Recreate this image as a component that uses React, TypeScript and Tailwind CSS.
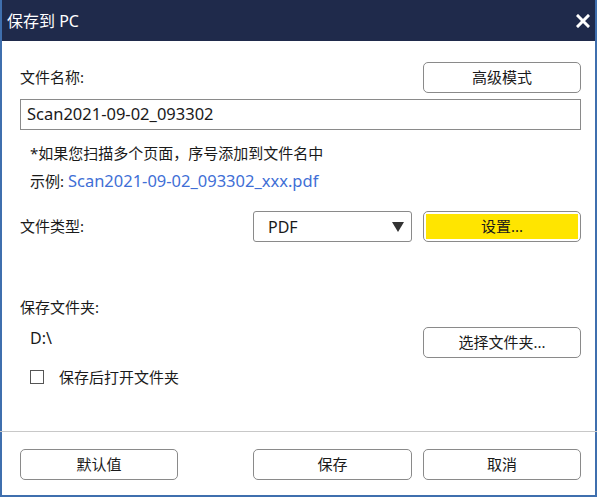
import React from "react";

const font = { fontFamily: '"Noto Sans", "Noto Sans CJK SC", sans-serif' };

function Btn({ children, className = "" }: { children: React.ReactNode; className?: string }) {
  return (
    <div
      className={`flex h-[31px] w-[158px] items-center justify-center rounded-[5px] border border-[#8a8a8a] text-[15px] text-[#1a1a1a] ${className}`}
    >
      {children}
    </div>
  );
}

export default function App() {
  return (
    <div
      className="flex h-[497px] w-[597px] flex-col border-x-[2px] border-b-[2px] border-[#3f6fae] bg-white"
      style={font}
    >
      <div className="flex h-[41px] shrink-0 items-center justify-between bg-[#1f2a4b] pl-[5px] pr-[5px] text-white">
        <span className="text-[16px]">保存到 PC</span>
        <svg width="14" height="14" viewBox="0 0 14 14">
          <path d="M2 2 L12 12 M12 2 L2 12" stroke="white" strokeWidth="3" strokeLinecap="square" />
        </svg>
      </div>
      <div className="flex flex-1 flex-col pl-[18px] pr-[14px] text-[15px] text-[#1a1a1a]">
        <div className="mt-[21px] flex items-center justify-between">
          <span>文件名称:</span>
          <Btn>高级模式</Btn>
        </div>
        <div className="mt-[6px] flex h-[31px] items-center border border-[#8a8a8a] pl-[6px] text-[16.5px]">
          Scan2021-09-02_093302
        </div>
        <div className="mt-[13px] pl-[10px] leading-[20px]">*如果您扫描多个页面，序号添加到文件名中</div>
        <div className="mt-[8px] pl-[10px] leading-[20px]">
          示例: <span className="text-[16.5px] text-[#3f6fd6]">Scan2021-09-02_093302_xxx.pdf</span>
        </div>
        <div className="mt-[20px] flex items-center">
          <span className="flex-1">文件类型:</span>
          <div className="flex h-[31px] w-[159px] items-center justify-between rounded-[3px] border border-[#8a8a8a] pl-[14px] pr-[7px]">
            <span className="text-[16px]">PDF</span>
            <svg width="12" height="10" viewBox="0 0 12 10">
              <path d="M0 0 H12 L6 10 Z" fill="#333" />
            </svg>
          </div>
          <div className="ml-[11px] flex h-[31px] w-[158px] items-center rounded-[5px] border border-[#8a8a8a] p-[2px]">
            <div className="flex h-full w-full items-center justify-center bg-[#ffe500]">设置...</div>
          </div>
        </div>
        <div className="mt-[55px] leading-[20px]">保存文件夹:</div>
        <div className="flex items-center justify-between">
          <span className="pl-[10px] text-[16px]">D:\</span>
          <div className="mt-[10px]">
            <Btn>选择文件夹...</Btn>
          </div>
        </div>
        <div className="mt-[8px] flex items-center pl-[10px]">
          <div className="h-[14px] w-[14px] border border-[#555]" />
          <span className="ml-[15px]">保存后打开文件夹</span>
        </div>
      </div>
      <div className="mx-[-2px] h-[1px] shrink-0 bg-[#c8c8c8]" />
      <div className="flex h-[63px] shrink-0 items-center pl-[18px] pr-[14px] pt-[2px]">
        <Btn>默认值</Btn>
        <div className="flex-1" />
        <Btn className="w-[159px]">保存</Btn>
        <Btn className="ml-[11px]">取消</Btn>
      </div>
    </div>
  );
}
